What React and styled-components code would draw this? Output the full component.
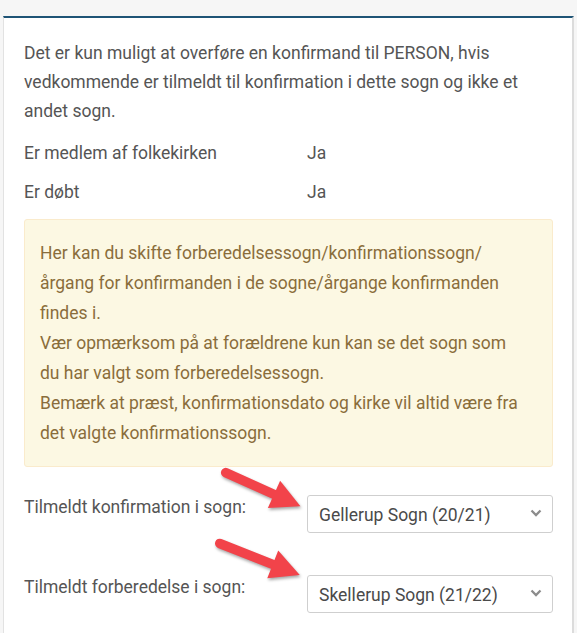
import React from "react"
import styled, { createGlobalStyle } from "styled-components"

const GlobalStyle = createGlobalStyle`
  html, body {
    margin: 0;
    padding: 0;
    background: #f6f6f6;
  }
  body {
    font-family: Roboto, "Liberation Sans", Arial, sans-serif;
    font-size: 17.5px;
    color: #555;
  }
`

const Page = styled.div`
  padding: 16px 3px 0 3px;
  height: 633px;
  box-sizing: border-box;
  overflow: hidden;
`

const Panel = styled.section`
  background: #fff;
  border-top: 2px solid #1f5476;
  border-left: 1px solid #e2e2e2;
  border-right: 2px solid #dcdcdc;
  padding: 21px 19px 40px 20px;
  min-height: 100%;
  box-sizing: border-box;
`

const Intro = styled.p`
  margin: 0 0 8px;
  line-height: 29px;
`

const InfoRow = styled.div`
  display: flex;
  padding: 5px 0;
  line-height: 29px;
`

const InfoLabel = styled.span`
  width: 283px;
  flex-shrink: 0;
`

const Alert = styled.div`
  margin-top: 7px;
  background: #fcf8e3;
  border: 1px solid #faebcc;
  border-radius: 3px;
  color: #8a6d3b;
  padding: 18px 26px 18px 15px;
  line-height: 30px;
`

const Form = styled.div`
  position: relative;
  margin-top: 28px;
  display: flex;
  flex-direction: column;
  gap: 42px;
`

const FieldRow = styled.div`
  display: flex;
  align-items: flex-start;
`

const FieldLabel = styled.label`
  width: 283px;
  flex-shrink: 0;
  line-height: 24px;
`

const SelectBox = styled.div`
  flex: 1;
  height: 38px;
  box-sizing: border-box;
  border: 1px solid #cfcfcf;
  border-radius: 3px;
  display: flex;
  align-items: center;
  justify-content: space-between;
  padding: 2px 10px 0 11px;
  font-size: 17.5px;
  color: #4a4a4a;
  background: #fff;
`

const Chevron = styled.svg`
  width: 12px;
  height: 8px;
  margin-top: -4px;
`

const ArrowLayer = styled.svg`
  position: absolute;
  left: 0;
  top: 0;
  width: 100%;
  height: 100%;
  overflow: visible;
  pointer-events: none;
  filter: drop-shadow(1px 2px 1.5px rgba(0, 0, 0, 0.35));
`

function Arrow({ x, y, angle, length }) {
  const base = length - 29
  return (
    <g transform={`translate(${x} ${y}) rotate(${angle})`}>
      <line x1="4" y1="0" x2={base + 4} y2="0" stroke="#f2434a" strokeWidth="9.5" strokeLinecap="round" />
      <polygon points={`${length},0 ${base},-15 ${base},15`} fill="#f2434a" />
    </g>
  )
}

function Select({ value }) {
  return (
    <SelectBox>
      <span>{value}</span>
      <Chevron viewBox="0 0 12 8">
        <path d="M1.5 1.5 L6 6 L10.5 1.5" fill="none" stroke="#8c8c8c" strokeWidth="2.3" />
      </Chevron>
    </SelectBox>
  )
}

export default function App() {
  return (
    <>
      <GlobalStyle />
      <Page>
        <Panel>
          <Intro>
            Det er kun muligt at overføre en konfirmand til PERSON, hvis vedkommende er tilmeldt til
            konfirmation i dette sogn og ikke et andet sogn.
          </Intro>
          <InfoRow>
            <InfoLabel>Er medlem af folkekirken</InfoLabel>
            <span>Ja</span>
          </InfoRow>
          <InfoRow>
            <InfoLabel>Er døbt</InfoLabel>
            <span>Ja</span>
          </InfoRow>
          <Alert>
            Her kan du skifte forberedelsessogn/konfirmationssogn/ årgang for konfirmanden i de
            sogne/årgange konfirmanden findes i.
            <br />
            Vær opmærksom på at forældrene kun kan se det sogn som du har valgt som forberedelsessogn.
            <br />
            Bemærk at præst, konfirmationsdato og kirke vil altid være fra det valgte konfirmationssogn.
          </Alert>
          <Form>
            <FieldRow>
              <FieldLabel>Tilmeldt konfirmation i sogn:</FieldLabel>
              <Select value="Gellerup Sogn (20/21)" />
            </FieldRow>
            <FieldRow>
              <FieldLabel>Tilmeldt forberedelse i sogn:</FieldLabel>
              <Select value="Skellerup Sogn (21/22)" />
            </FieldRow>
            <ArrowLayer>
              <Arrow x={198} y={-24} angle={24.2} length={86} />
              <Arrow x={192} y={47} angle={21.5} length={90} />
            </ArrowLayer>
          </Form>
        </Panel>
      </Page>
    </>
  )
}
